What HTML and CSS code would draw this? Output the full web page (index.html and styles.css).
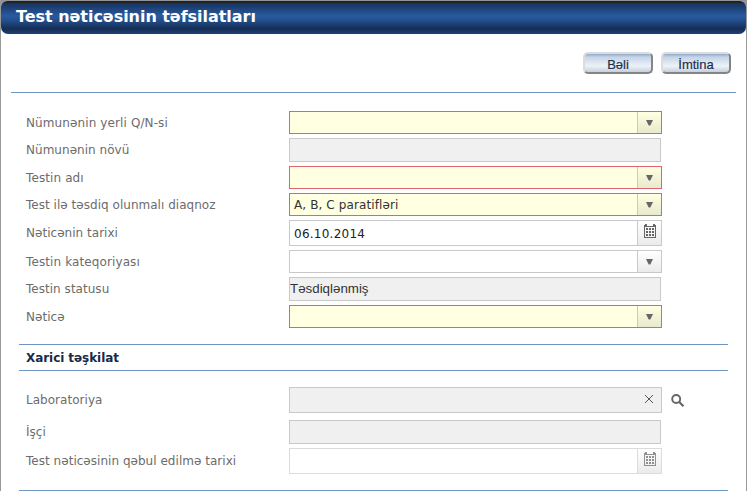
FILE: index.html
```html
<!DOCTYPE html>
<html lang="az">
<head>
<meta charset="utf-8">
<title>Test nəticəsinin təfsilatları</title>
<link rel="stylesheet" href="styles.css">
</head>
<body>
<svg class="defs" width="0" height="0">
  <symbol id="arrow" viewBox="0 0 7 6"><path d="M0 0H7L4.3 5.6H2.7Z" fill="#666"/></symbol>
  <symbol id="calendar" viewBox="0 0 12 14" shape-rendering="crispEdges">
    <path d="M0 1H1V0H3V1H9V0H11V1H12V14H0ZM1 3V13H11V3ZM3 1V2H9V1Z" fill="#666" fill-rule="evenodd"/>
    <path d="M2 4h2v2H2zM5 4h2v2H5zM8 4h2v2H8zM2 7h2v2H2zM5 7h2v2H5zM8 7h2v2H8zM2 10h2v2H2zM5 10h2v2H5zM8 10h2v2H8z" fill="#666"/>
  </symbol>
</svg>
<div class="dialog">
  <header class="title"><h1>Test nəticəsinin təfsilatları</h1></header>
  <div class="actions"><button>Bəli</button><button>İmtina</button></div>
  <main class="form">
    <div class="row"><label class="wide">Nümunənin yerli Q/N-si</label><div class="field required"><span class="value"></span><span class="trigger"><svg class="arrow"><use href="#arrow"/></svg></span></div></div>
    <div class="row"><label>Nümunənin növü</label><div class="field readonly"></div></div>
    <div class="row"><label class="wide">Testin adı</label><div class="field required"><span class="value"></span><span class="trigger"><svg class="arrow"><use href="#arrow"/></svg></span></div></div>
    <div class="row"><label>Test ilə təsdiq olunmalı diaqnoz</label><div class="field required"><span class="value wide">A, B, C paratifləri</span><span class="trigger"><svg class="arrow"><use href="#arrow"/></svg></span></div></div>
    <div class="row"><label>Nəticənin tarixi</label><div class="field date"><span class="value">06.10.2014</span><span class="trigger"><svg class="calendar"><use href="#calendar"/></svg></span></div></div>
    <div class="row"><label class="wide">Testin kateqoriyası</label><div class="field"><span class="value"></span><span class="trigger"><svg class="arrow"><use href="#arrow"/></svg></span></div></div>
    <div class="row"><label>Testin statusu</label><div class="field readonly">Təsdiqlənmiş</div></div>
    <div class="row"><label>Nəticə</label><div class="field required"><span class="value"></span><span class="trigger"><svg class="arrow"><use href="#arrow"/></svg></span></div></div>
  </main>
  <section class="external">
    <h2>Xarici təşkilat</h2>
    <div class="row"><label>Laboratoriya</label><div class="field lookup"><svg class="clear" viewBox="0 0 8 8"><path d="M0 0L8 8M8 0L0 8" stroke="#555" stroke-width="1"/></svg></div>
      <svg class="search" viewBox="0 0 14 14"><circle cx="5.2" cy="5" r="4" fill="none" stroke="#666" stroke-width="1.9"/><path d="M8.2 8L12.5 12.2" stroke="#666" stroke-width="2.2"/></svg></div>
    <div class="row worker"><label>İşçi</label><div class="field readonly"></div></div>
    <div class="row"><label>Test nəticəsinin qəbul edilmə tarixi</label><div class="field date disabled"><span class="value"></span><span class="trigger"><svg class="calendar"><use href="#calendar"/></svg></span></div></div>
  </section>
  <div class="next-section"></div>
</div>
</body>
</html>
```
FILE: styles.css
```css
* { box-sizing: border-box; }
body {
  margin: 0;
  height: 491px;
  overflow: hidden;
  background: #fff;
  font: 12px/16px "DejaVu Sans", sans-serif;
  color: #6c6c6c;
}
svg { display: block; }
.defs { position: absolute; }
.dialog {
  height: 491px;
  border: 1px solid #999;
  border-bottom: 0;
}
.title {
  margin: 0;
  height: 33px;
  background: linear-gradient(#222 0 2px, #17335d 2px, #285aa0 15px, #24508e 19px, #142d54 28px, #1d3e70 32px);
  border-radius: 6px 6px 7px 7px;
  box-shadow: 0 -6px 0 #8f949c;
}
h1 {
  margin: 0;
  padding: 6px 0 0 15px;
  font-size: 16px;
  line-height: 20px;
  color: #fff;
  letter-spacing: -0.04px;
}
.actions {
  height: 59px;
  margin: 0 10px;
  padding: 18px 5px 0 0;
  display: flex;
  justify-content: flex-end;
  gap: 8px;
  border-bottom: 1px solid #6e94c0;
}
button {
  width: 70px;
  height: 22px;
  padding: 3px 0 0;
  border: 2px solid;
  border-color: #dcdcdc #858585 #858585 #dcdcdc;
  border-radius: 5px;
  background: linear-gradient(#8fa9cc, #c4d3e6 3px, #dce5f0 8px, #eef2f7 12px, #c3d0e1);
  color: #1c2f4e;
  font: 13px/15px "Liberation Sans", sans-serif;
  -webkit-text-stroke: 0.2px #1c2f4e;
}
.form {
  padding: 18px 0 0 25px;
  display: flex;
  flex-direction: column;
  gap: 4px;
}
.row {
  display: grid;
  grid-template-columns: 263px 373px 23px;
  align-items: center;
}
label { white-space: nowrap; letter-spacing: 0.03px; }
.wide { letter-spacing: 0.11px; }
.field {
  width: 373px;
  height: 23px;
  border: 1px solid #c9c9c9;
  display: flex;
  align-items: stretch;
  color: #333;
}
.value { flex: 1; padding: 3px 0 0 4px; }
.trigger {
  width: 24px;
  border-left: 1px solid #c9c9c9;
  display: flex;
  justify-content: center;
  align-items: center;
  background: linear-gradient(#fff, #ebebeb);
}
.required { border-color: #e0656b; background: #ffffe1; }
.required .trigger { background: linear-gradient(#ffffe1, #e9e9cf); }
.readonly {
  width: 372px;
  height: 24px;
  background: #f0f0f0;
  font: 13.33px/22px "Liberation Sans", sans-serif;
}
.date { height: 26px; }
.date .value { padding-top: 5px; font-size: 12px; color: #222; }
.date .trigger { align-items: flex-start; padding-top: 3px; }
.disabled { border-color: #dcdcdc; }
.disabled .trigger { border-color: #dcdcdc; }
.disabled svg { opacity: .7; }
.arrow { width: 7px; height: 6px; }
.calendar { width: 12px; height: 14px; }
.external {
  margin: 16px 18px 0;
}
h2 {
  margin: 0 0 16px;
  height: 27px;
  padding: 5px 0 0 7px;
  border-top: 1px solid #6e94c0;
  border-bottom: 1px solid #6e94c0;
  font-size: 12px;
  line-height: 16px;
  letter-spacing: -0.06px;
  color: #17294a;
}
.external .row { padding-left: 7px; }
.lookup {
  height: 26px;
  background: #f0f0f0;
  justify-content: flex-end;
  padding: 7px 8px 0 0;
}
.clear { width: 8px; height: 8px; }
.search { width: 14px; height: 14px; margin: 2px 0 0 9px; }
.worker { margin: 7px 0 4px; }
.next-section {
  margin: 16px 18px 0;
  border-top: 1px solid #6e94c0;
}
.date:not(.disabled) .value { letter-spacing: 0.25px; }
```
